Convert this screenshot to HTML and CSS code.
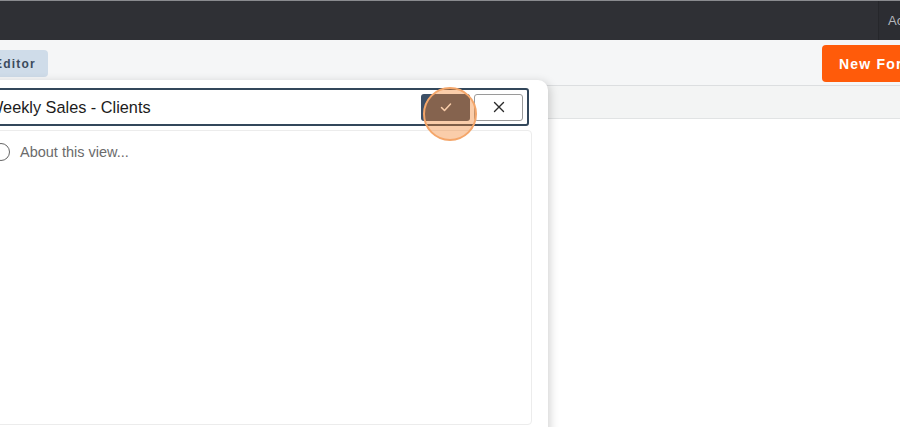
FILE: index.html
```html
<!DOCTYPE html>
<html lang="en">
<head>
    <meta charset="UTF-8">
    <meta name="viewport" content="width=device-width, initial-scale=1.0">
    <title>Views</title>
    <link rel="stylesheet" href="styles.css">
</head>
<body>
    <div class="topbar">
        <div class="topbar-user">Account</div>
    </div>
    <div class="toolbar">
        <button class="btn btn-editor">Editor</button>
        <button class="btn btn-new">New Form</button>
    </div>
    <div class="tabstrip"></div>
    <div class="content"></div>

    <!-- Rename view popover -->
    <div class="popover">
        <div class="name-field">
            <span class="name-text">Weekly Sales - Clients</span>
            <button class="icon-btn icon-btn-save">
                <svg width="14" height="14" viewBox="0 0 14 14"><path d="M2.5 7.5 L5.5 10.5 L11.5 4" fill="none" stroke="#fff" stroke-width="1.5" stroke-linecap="round" stroke-linejoin="round"/></svg>
            </button>
            <button class="icon-btn icon-btn-cancel">
                <svg width="12" height="12" viewBox="0 0 12 12"><path d="M1.5 1.5 L10.5 10.5 M10.5 1.5 L1.5 10.5" fill="none" stroke="#2b2b2b" stroke-width="1.4" stroke-linecap="round"/></svg>
            </button>
            <span class="click-marker"></span>
        </div>
        <div class="desc-box">
            <div class="desc-row">
                <span class="radio"></span>
                <span class="desc-text">About this view...</span>
            </div>
        </div>
    </div>
</body>
</html>
```

FILE: styles.css
```css
body {
    margin: 0;
    width: 900px;
    height: 427px;
    overflow: hidden;
    position: relative;
    font-family: "Liberation Sans", Arial, sans-serif;
    background: #ffffff;
    color: #222;
}

.topbar {
    height: 39px;
    background: #2f3035;
    border-top: 1px solid #8a8b8f;
    display: flex;
    justify-content: flex-end;
}

.topbar-user {
    width: 12px;
    padding-left: 9px;
    border-left: 1px solid #26272b;
    background: #2c2d32;
    color: #b4b6bb;
    font-size: 13px;
    line-height: 39px;
    white-space: nowrap;
    overflow: hidden;
}

.toolbar {
    height: 45px;
    background: #f5f6f7;
    border-bottom: 1px solid #dcdee0;
    display: flex;
    justify-content: space-between;
    align-items: flex-start;
}

.btn {
    border: none;
    font-family: "Liberation Sans", Arial, sans-serif;
    font-weight: 700;
    letter-spacing: 1.2px;
    white-space: nowrap;
    cursor: pointer;
}

.btn-editor {
    margin: 10px 0 0 -14px;
    height: 27px;
    padding: 0 12px 0 8px;
    background: #cfdce9;
    color: #3b4a5c;
    font-size: 12px;
    border-radius: 4px;
}

.btn-new {
    margin-top: 5px;
    height: 37px;
    width: 110px;
    padding: 0 0 0 17px;
    text-align: left;
    background: #ff5b0a;
    color: #fff;
    font-size: 14px;
    border-radius: 4px;
    margin-right: -32px;
}

.tabstrip {
    height: 32px;
    background: #f3f4f4;
    border-bottom: 1px solid #e1e3e4;
}

.popover {
    position: absolute;
    left: -40px;
    top: 80px;
    width: 572px;
    height: 360px;
    padding: 8px 16px 0 0;
    background: #fff;
    border-radius: 0 10px 0 0;
    box-shadow: 2px 2px 10px rgba(0, 0, 0, 0.18);
}

.name-field {
    position: relative;
    margin-left: 22px;
    margin-right: 3px;
    height: 34px;
    border: 2px solid #33475b;
    border-radius: 3px;
    display: flex;
    align-items: center;
    padding: 0 4px 0 4px;
}

.name-text {
    flex: 1;
    font-size: 16.3px;
    color: #1c1c1c;
}

.icon-btn {
    width: 49px;
    height: 27px;
    border-radius: 3px;
    display: flex;
    align-items: center;
    justify-content: center;
    padding: 0;
}

.icon-btn-save {
    background: #3c4f66;
    border: none;
    margin-right: 4px;
}

.icon-btn-cancel {
    background: #fff;
    border: 1px solid #9a9a9a;
}

.click-marker {
    position: absolute;
    right: 50px;
    top: -3px;
    width: 50px;
    height: 50px;
    border-radius: 50%;
    border: 2px solid #f4a66a;
    background: rgba(242, 130, 42, 0.4);
}

.desc-box {
    margin-top: 4px;
    margin-left: 22px;
    height: 293px;
    border: 1px solid #ececec;
    border-radius: 4px;
}

.desc-row {
    display: flex;
    align-items: center;
    gap: 10px;
    padding: 12px 0 0 9px;
}

.radio {
    width: 16px;
    height: 16px;
    border: 1.5px solid #666;
    border-radius: 50%;
}

.desc-text {
    font-size: 14.5px;
    color: #6b6b6b;
}
```
